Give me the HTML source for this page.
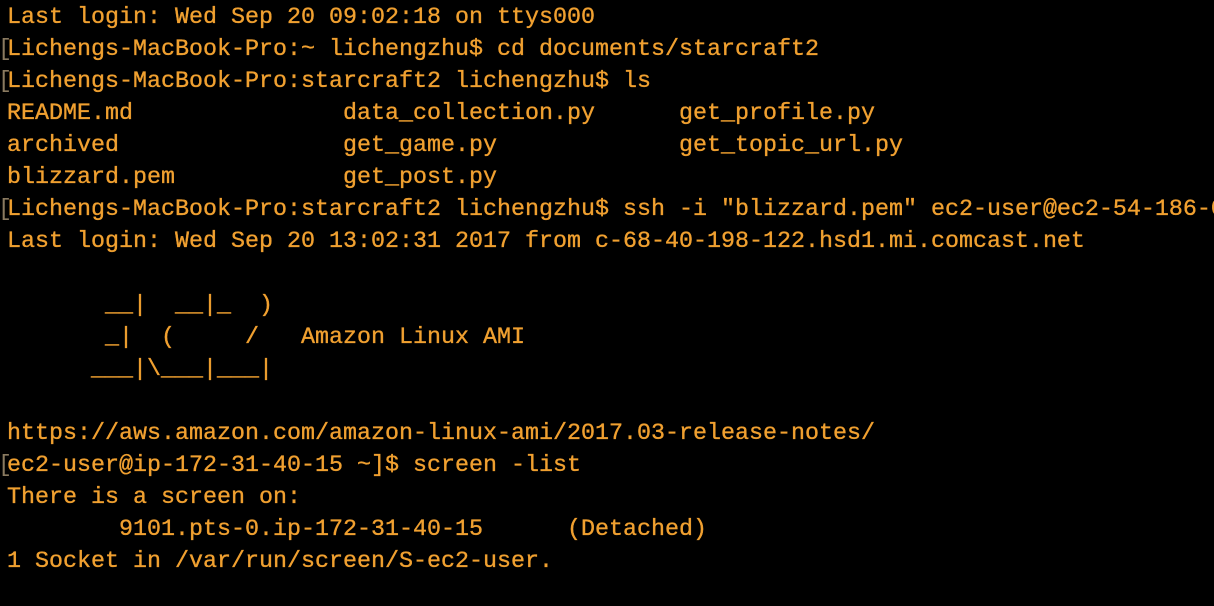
<html><head><style>
body{margin:0;background:#000;width:1214px;height:606px;overflow:hidden}
pre{margin:0;padding:2px 0 0 7px;font-family:"Liberation Mono",monospace;font-size:23.33px;line-height:32px;color:#f0a030;white-space:pre;position:relative;-webkit-text-stroke:0.35px #f0a030}
.l{position:relative;height:32px}
.b{position:absolute;left:-9px;color:#8a7a60;-webkit-text-stroke:0}
</style></head><body><pre><div class="l">Last login: Wed Sep 20 09:02:18 on ttys000</div><div class="l"><span class="b">[</span>Lichengs-MacBook-Pro:~ lichengzhu$ cd documents/starcraft2</div><div class="l"><span class="b">[</span>Lichengs-MacBook-Pro:starcraft2 lichengzhu$ ls</div><div class="l">README.md               data_collection.py      get_profile.py</div><div class="l">archived                get_game.py             get_topic_url.py</div><div class="l">blizzard.pem            get_post.py</div><div class="l"><span class="b">[</span>Lichengs-MacBook-Pro:starcraft2 lichengzhu$ ssh -i "blizzard.pem" ec2-user@ec2-54-186-0</div><div class="l">Last login: Wed Sep 20 13:02:31 2017 from c-68-40-198-122.hsd1.mi.comcast.net</div><div class="l"> </div><div class="l">       __|  __|_  )</div><div class="l">       _|  (     /   Amazon Linux AMI</div><div class="l">      ___|\___|___|</div><div class="l"> </div><div class="l">https://aws.amazon.com/amazon-linux-ami/2017.03-release-notes/</div><div class="l"><span class="b">[</span>ec2-user@ip-172-31-40-15 ~]$ screen -list</div><div class="l">There is a screen on:</div><div class="l">        9101.pts-0.ip-172-31-40-15      (Detached)</div><div class="l">1 Socket in /var/run/screen/S-ec2-user.</div></pre></body></html>
